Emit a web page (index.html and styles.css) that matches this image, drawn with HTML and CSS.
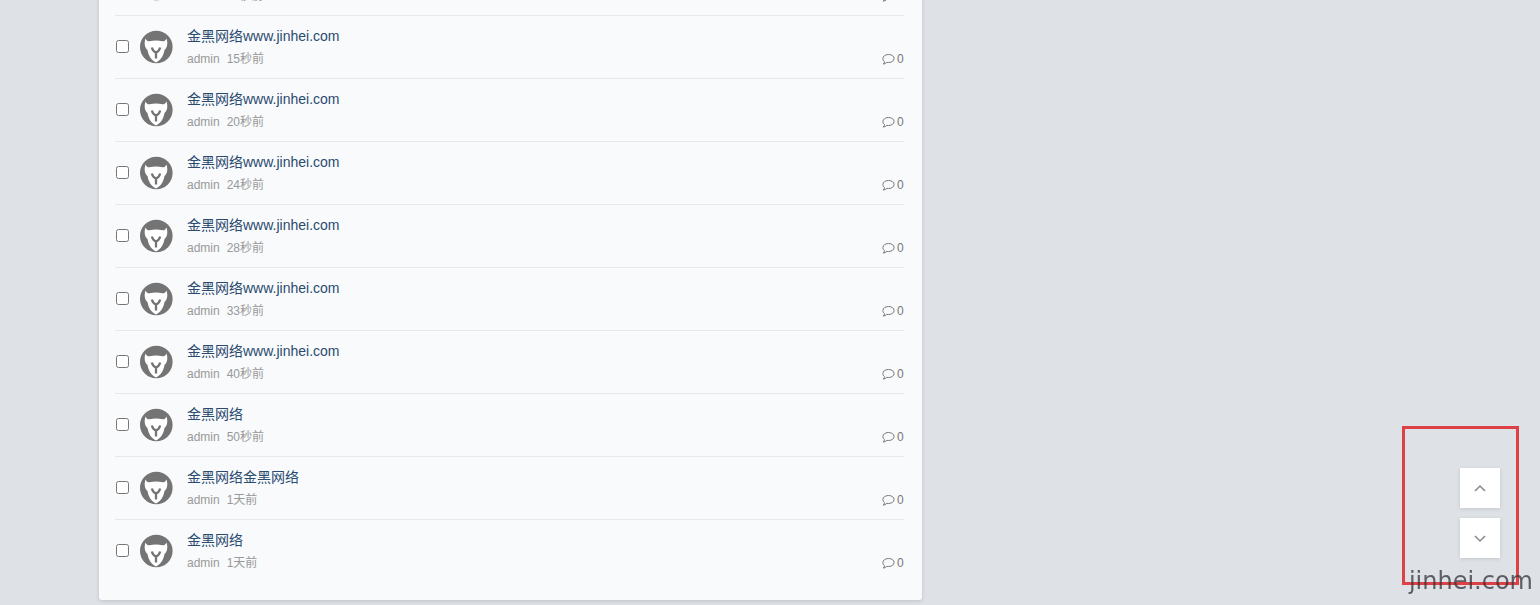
FILE: index.html
```html
<!DOCTYPE html>
<html lang="zh-CN">
<head>
    <meta charset="UTF-8" />
    <meta name="viewport" content="width=device-width, initial-scale=1.0" />
    <title>金黑网络</title>
    <link rel="stylesheet" href="styles.css">
</head>
<body>

    <svg class="sprite" aria-hidden="true">
        <symbol id="avatar" viewBox="0 0 34 34">
            <circle cx="17.300" cy="17" r="16.3" fill="#747474" />
            <path d="M6.500 8.500 C7.500 10.500 8.500 11.500 10.500 11.300 C14.500 10.300 19.500 10.300 23.500 11.300 C25.500 11.500 26.500 10.500 27.500 8.500 C29 13 28.500 17.500 25.500 20 C24.500 25.500 22 30 17 32.500 C12 30 9.500 25.500 8.500 20 C5.500 17.500 5 13 6.500 8.500Z" fill="#fff" />
            <path d="M12.800 17.500 Q14 21.500 17 22.500 Q20 21.500 21.200 17.500 M17 22 V28.500" fill="none" stroke="#747474" stroke-width="2.300" />
        </symbol>
        <symbol id="comment" viewBox="0 0 14 14">
            <path d="M7.500 2.500 C10.800 2.500 13.100 4.300 13.100 6.500 S10.800 10.500 7.500 10.500 C6.900 10.500 6.300 10.500 5.800 10.400 C4.800 11.400 3.500 12 2.300 12.100 C3 11.400 3.400 10.600 3.500 9.600 C2.400 8.900 1.900 7.800 1.900 6.500 C1.900 4.300 4.200 2.500 7.500 2.500Z" fill="none" stroke="currentColor" />
        </symbol>
    </svg>

    <main class="card">
        <ul class="threads" id="threads"></ul>
    </main>

    <div class="marker"></div>
    <div class="scroll-btns">
        <button type="button" id="toTop" aria-label="返回顶部">
            <svg viewBox="0 0 14 14"><path d="M2 10 L7 5 L12 10" /></svg>
        </button>
        <button type="button" id="toBottom" aria-label="前往底部">
            <svg viewBox="0 0 14 14"><path d="M2 5 L7 10 L12 5" /></svg>
        </button>
    </div>
    <div class="watermark">jinhei.com</div>

    <script src="script.js"></script>
</body>
</html>
```
FILE: styles.css
```css
body {
    display: flex;
    flex-direction: column;
    justify-content: flex-end;
    box-sizing: border-box;
    height: 100vh;
    margin: 0;
    padding: 0 0 5px 99px;
    overflow: hidden;
    background-color: #dee1e6;
    font-family: "Liberation Sans", "Noto Sans CJK SC", sans-serif;
    font-size: 12px;
    color: #999;
}

.sprite {
    position: absolute;
    width: 0;
    height: 0;
}

.card {
    box-sizing: border-box;
    width: calc(57vw - 55px);
    padding: 0 18px 18px 16px;
    background-color: #f8fafc;
    border-radius: 3px;
    box-shadow: 0 1px 4px rgba(0, 0, 0, 0.14);
}

.threads {
    margin: 0;
    padding: 0;
    list-style: none;
}

.thread {
    display: flex;
    align-items: center;
    box-sizing: border-box;
    height: 63px;
    padding-bottom: 1px;
    border-top: 1px solid #e6e9ec;
}

.thread input {
    width: 13px;
    height: 13px;
    margin: 0 10px 0 1px;
}

.avatar {
    width: 34px;
    height: 34px;
    margin-right: 14px;
}

.thread-body {
    flex: 1;
}

.title {
    display: block;
    font-size: 14px;
    line-height: 22px;
    color: #2b4a6f;
    text-decoration: none;
}

.meta {
    display: flex;
    gap: 7px;
    margin-top: 2px;
    line-height: 20px;
}

.replies {
    display: flex;
    align-items: center;
    gap: 2px;
    margin-left: auto;
    color: #777;
}

.replies svg {
    width: 14px;
    height: 14px;
}

.marker {
    position: fixed;
    right: 21px;
    bottom: 20px;
    box-sizing: border-box;
    width: 117px;
    height: 159px;
    border: 3px solid #dd4145;
}

.scroll-btns {
    position: fixed;
    right: 40px;
    bottom: 47px;
    display: flex;
    flex-direction: column;
    gap: 10px;
}

.scroll-btns button {
    display: flex;
    align-items: center;
    justify-content: center;
    width: 40px;
    height: 40px;
    padding: 0;
    border: none;
    background-color: #fff;
    box-shadow: 0 1px 4px rgba(0, 0, 0, 0.12);
    cursor: pointer;
}

.scroll-btns svg {
    width: 14px;
    height: 14px;
    fill: none;
    stroke: #888;
    stroke-width: 1.5;
}

.watermark {
    position: fixed;
    right: 7px;
    bottom: 10px;
    font-family: "DejaVu Sans", sans-serif;
    font-size: 24px;
    line-height: 28px;
    color: rgba(50, 50, 55, 0.75);
}
```
FILE: script.js
```js
const site = "金黑网络www.jinhei.com"

const threads = [
    { title: site, time: "11秒前" },
    { title: site, time: "15秒前" },
    { title: site, time: "20秒前" },
    { title: site, time: "24秒前" },
    { title: site, time: "28秒前" },
    { title: site, time: "33秒前" },
    { title: site, time: "40秒前" },
    { title: "金黑网络", time: "50秒前" },
    { title: "金黑网络金黑网络", time: "1天前" },
    { title: "金黑网络", time: "1天前" }
]

document.getElementById("threads").innerHTML = threads.map((t, i) => `
    <li class="thread">
        <input type="checkbox" id="thread${i}" aria-labelledby="title${i}" />
        <svg class="avatar" aria-hidden="true"><use href="#avatar" /></svg>
        <div class="thread-body">
            <a class="title" id="title${i}" href="#thread${i}">${t.title}</a>
            <div class="meta">
                <span>admin</span>
                <span>${t.time}</span>
                <span class="replies"><svg aria-hidden="true"><use href="#comment" /></svg>0</span>
            </div>
        </div>
    </li>`).join("")

document.getElementById("toTop").addEventListener("click", () => {
    window.scrollTo(0, 0)
})

document.getElementById("toBottom").addEventListener("click", () => {
    window.scrollTo(0, document.body.scrollHeight)
})
```
